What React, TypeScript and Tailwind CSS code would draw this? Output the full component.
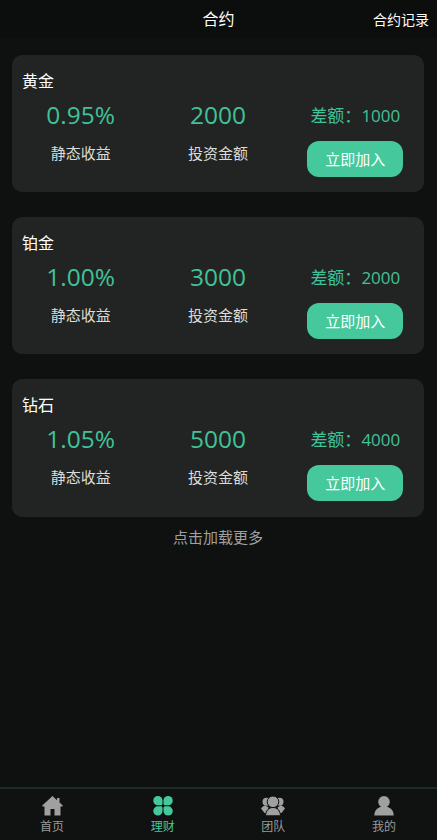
const font = "font-['Segoe_UI','Open_Sans','Noto_Sans_CJK_SC',sans-serif]";

const plans = [
  { name: "黄金", rate: "0.95%", amount: "2000", diff: "1000", h: "h-[137px]" },
  { name: "铂金", rate: "1.00%", amount: "3000", diff: "2000", h: "h-[137px]" },
  { name: "钻石", rate: "1.05%", amount: "5000", diff: "4000", h: "h-[138px]" },
];

function Card({ p }: { p: (typeof plans)[number] }) {
  return (
    <div className={`${p.h} rounded-[10px] bg-[#212423] pt-[15px]`}>
      <div className="h-[22px] pl-[10px] text-[16px] leading-[22px] text-white">{p.name}</div>
      <div className="grid grid-cols-3">
        <div className="flex flex-col items-center">
          <div className="mt-[6px] h-[34px] text-[24.5px] leading-[34px] text-[#41c197]">{p.rate}</div>
          <div className="mt-[11px] text-[15px] leading-[20px] text-[#dcdcd8]">静态收益</div>
        </div>
        <div className="flex flex-col items-center">
          <div className="mt-[6px] h-[34px] text-[24.5px] leading-[34px] text-[#41c197]">{p.amount}</div>
          <div className="mt-[11px] text-[15px] leading-[20px] text-[#dcdcd8]">投资金额</div>
        </div>
        <div className="flex flex-col items-center">
          <div className="mt-[6px] h-[34px] text-[17px] leading-[36px] whitespace-nowrap text-[#41c197]">差额：{p.diff}</div>
          <button className="mt-[9px] h-[36px] w-[96px] rounded-[12px] bg-[#45c89c] text-[15px] text-white">立即加入</button>
        </div>
      </div>
    </div>
  );
}

function Tab({ label, active, children }: { label: string; active?: boolean; children: React.ReactNode }) {
  return (
    <div className="flex w-[24px] flex-col items-center">
      <svg width="24" height="20" viewBox="0 0 24 20" className="mt-[7px]">{children}</svg>
      <div className={`mt-[2px] whitespace-nowrap text-[12px] leading-[17px] ${active ? "text-[#45c89c]" : "text-[#9a9a9a]"}`}>{label}</div>
    </div>
  );
}

export default function App() {
  return (
    <div className={`flex h-[840px] w-[437px] flex-col overflow-hidden bg-[#0e1110] ${font}`}>
      <header className="flex h-[38px] items-center justify-between bg-[#0c0d0d] pr-[8px]">
        <div className="w-[108px]" />
        <div className="text-[16px] text-white">合约</div>
        <div className="flex w-[100px] justify-end text-[14px] text-white">合约记录</div>
      </header>
      <main className="flex flex-1 flex-col pl-[12px] pr-[13px] pt-[17px]">
        <div className="flex flex-col gap-[25px]">
          {plans.map((p) => (
            <Card key={p.name} p={p} />
          ))}
        </div>
        <div className="mt-[10px] text-center text-[15px] leading-[20px] text-[#a0a0a0]">点击加载更多</div>
      </main>
      <nav className="flex h-[53px] justify-between border-t-2 border-[#1a2a25] bg-[#0f1211] pl-[40px] pr-[41px]">
        <Tab label="首页">
          <path fill="#a0a0a0" fillRule="evenodd" d="M12.500 0 2 9.800l.8.8h1.700V19.500h16V10.600h1.700l.8-.8L19.500 6.500V2h-2.500v2.200L12.500 0Zm-2 13h4v6.500h-4V13Z" />
        </Tab>
        <Tab label="理财" active>
          <g fill="#45c89c">
            <path d="M6.900 0a4.600 4.600 0 0 1 4.600 4.600v3.200a1.500 1.500 0 0 1-1.500 1.500H6.900A4.650 4.650 0 0 1 6.900 0Z" />
            <path d="M17.100 0a4.600 4.600 0 0 0-4.600 4.600v3.200a1.500 1.500 0 0 0 1.500 1.500h3.100a4.650 4.650 0 0 0 0-9.300Z" />
            <path d="M6.900 19.600a4.600 4.600 0 0 0 4.600-4.600v-3.200a1.500 1.500 0 0 0-1.500-1.500H6.900a4.650 4.650 0 0 0 0 9.300Z" />
            <path d="M17.100 19.600a4.600 4.600 0 0 1-4.600-4.600v-3.200a1.500 1.500 0 0 1 1.500-1.500h3.100a4.650 4.650 0 0 1 0 9.300Z" />
          </g>
        </Tab>
        <Tab label="团队">
          <g fill="#a0a0a0">
            <circle cx="5.500" cy="5.800" r="4" />
            <circle cx="18.500" cy="5.800" r="4" />
            <path d="M0 12.500c1-1.500 2.500-2.800 4.500-3l3 2-2 5.500H3.500Z" />
            <path d="M24 12.500c-1-1.500-2.500-2.800-4.500-3l-3 2 2 5.500h2Z" />
            <circle cx="12" cy="5.800" r="5.800" stroke="#0f1211" strokeWidth="1" />
            <path d="M4.500 19.800c.3-5 3-8.300 7.500-8.300s7.200 3.300 7.500 8.300Z" stroke="#0f1211" strokeWidth="1" />
          </g>
        </Tab>
        <Tab label="我的">
          <g fill="#a0a0a0">
            <circle cx="12" cy="5.800" r="5.800" />
            <path d="M2.300 19.500c0-6 4.500-9 9.700-9s9.700 3 9.700 9Z" />
          </g>
        </Tab>
      </nav>
    </div>
  );
}
